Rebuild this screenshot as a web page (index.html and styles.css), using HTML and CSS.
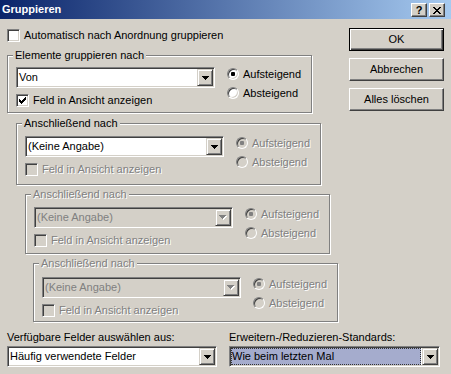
FILE: index.html
```html
<!DOCTYPE html>
<html lang="de">
<head>
<meta charset="utf-8">
<title>Gruppieren</title>
<link rel="stylesheet" href="styles.css">
</head>
<body>
<div class="titlebar">
  <span class="title">Gruppieren</span>
  <div class="caption-btns">
    <span class="cbtn help">?</span>
    <span class="cbtn"><svg width="8" height="7" viewBox="0 0 8 7"><path d="M0 0h2v1h-2zM6 0h2v1h-2zM1 1h2v1h-2zM5 1h2v1h-2zM2 2h4v1h-4zM3 3h2v1h-2zM2 4h4v1h-4zM1 5h2v1h-2zM5 5h2v1h-2zM0 6h2v1h-2zM6 6h2v1h-2z" fill="#000"/></svg></span>
  </div>
</div>
<div class="client">
  <div class="main">
    <div class="left">
      <div class="check top-check"><span class="box"></span><span>Automatisch nach Anordnung gruppieren</span></div>

      <fieldset class="group g1">
        <legend>Elemente gruppieren nach</legend>
        <div class="grow">
          <div class="gleft">
            <div class="combo"><span class="val">Von</span><span class="arrow"><svg width="7" height="4" viewBox="0 0 7 4"><path d="M0 0h7v1h-1v1h-1v1h-1v1h-1v-1h-1v-1h-1v-1h-1z" fill="#000"/></svg></span></div>
            <div class="check"><span class="box"><svg width="7" height="7" viewBox="0 0 7 7"><path d="M0 2V5H1V6H2V7H3V6H4V5H5V4H6V3H7V0H6V1H5V2H4V3H3V4H2V3H1V2Z" fill="#000"/></svg></span><span>Feld in Ansicht anzeigen</span></div>
          </div>
          <div class="gright">
            <div class="radio"><span class="rb on"></span><span>Aufsteigend</span></div>
            <div class="radio"><span class="rb"></span><span>Absteigend</span></div>
          </div>
        </div>
      </fieldset>

      <fieldset class="group g2">
        <legend>Anschließend nach</legend>
        <div class="grow">
          <div class="gleft">
            <div class="combo"><span class="val">(Keine Angabe)</span><span class="arrow"><svg width="7" height="4" viewBox="0 0 7 4"><path d="M0 0h7v1h-1v1h-1v1h-1v1h-1v-1h-1v-1h-1v-1h-1z" fill="#000"/></svg></span></div>
            <div class="check dis"><span class="box"></span><span>Feld in Ansicht anzeigen</span></div>
          </div>
          <div class="gright dis">
            <div class="radio"><span class="rb on"></span><span>Aufsteigend</span></div>
            <div class="radio"><span class="rb"></span><span>Absteigend</span></div>
          </div>
        </div>
      </fieldset>

      <fieldset class="group g3 dis">
        <legend>Anschließend nach</legend>
        <div class="grow">
          <div class="gleft">
            <div class="combo"><span class="val">(Keine Angabe)</span><span class="arrow"><svg width="8" height="5" viewBox="0 0 8 5"><path transform="translate(1 1)" d="M0 0h7v1h-1v1h-1v1h-1v1h-1v-1h-1v-1h-1v-1h-1z" fill="#fff"/><path d="M0 0h7v1h-1v1h-1v1h-1v1h-1v-1h-1v-1h-1v-1h-1z" fill="#808080"/></svg></span></div>
            <div class="check"><span class="box"></span><span>Feld in Ansicht anzeigen</span></div>
          </div>
          <div class="gright">
            <div class="radio"><span class="rb on"></span><span>Aufsteigend</span></div>
            <div class="radio"><span class="rb"></span><span>Absteigend</span></div>
          </div>
        </div>
      </fieldset>

      <fieldset class="group g4 dis">
        <legend>Anschließend nach</legend>
        <div class="grow">
          <div class="gleft">
            <div class="combo"><span class="val">(Keine Angabe)</span><span class="arrow"><svg width="8" height="5" viewBox="0 0 8 5"><path transform="translate(1 1)" d="M0 0h7v1h-1v1h-1v1h-1v1h-1v-1h-1v-1h-1v-1h-1z" fill="#fff"/><path d="M0 0h7v1h-1v1h-1v1h-1v1h-1v-1h-1v-1h-1v-1h-1z" fill="#808080"/></svg></span></div>
            <div class="check"><span class="box"></span><span>Feld in Ansicht anzeigen</span></div>
          </div>
          <div class="gright">
            <div class="radio"><span class="rb on"></span><span>Aufsteigend</span></div>
            <div class="radio"><span class="rb"></span><span>Absteigend</span></div>
          </div>
        </div>
      </fieldset>
    </div>

    <div class="buttons">
      <span class="btn default">OK</span>
      <span class="btn">Abbrechen</span>
      <span class="btn">Alles löschen</span>
    </div>
  </div>

  <div class="bottom">
    <div class="field f1">
      <span class="label">Verfügbare Felder auswählen aus:</span>
      <div class="combo"><span class="val">Häufig verwendete Felder</span><span class="arrow"><svg width="7" height="4" viewBox="0 0 7 4"><path d="M0 0h7v1h-1v1h-1v1h-1v1h-1v-1h-1v-1h-1v-1h-1z" fill="#000"/></svg></span></div>
    </div>
    <div class="field f2">
      <span class="label">Erweitern-/Reduzieren-Standards:</span>
      <div class="combo"><span class="val sel">Wie beim letzten Mal</span><span class="arrow"><svg width="7" height="4" viewBox="0 0 7 4"><path d="M0 0h7v1h-1v1h-1v1h-1v1h-1v-1h-1v-1h-1v-1h-1z" fill="#000"/></svg></span></div>
    </div>
  </div>
</div>
</body>
</html>
```

FILE: styles.css
```css
* { box-sizing: border-box; }
html, body { margin: 0; padding: 0; }
body {
  width: 451px;
  height: 374px;
  overflow: hidden;
  background: #d4d0c8;
  font-family: "Liberation Sans", Arial, sans-serif;
  font-size: 11px;
  line-height: 13px;
  color: #000;
}
svg { display: block; shape-rendering: crispEdges; }

/* title bar */
.titlebar {
  height: 19px;
  display: flex;
  justify-content: space-between;
  background: linear-gradient(to right, #0a246a, #a6caf0);
}
.title {
  color: #fff;
  font-weight: bold;
  line-height: 19px;
  padding-left: 2px;
}
.caption-btns {
  display: flex;
  gap: 2px;
  padding: 3px 6px 0 0;
}
.cbtn {
  width: 16px;
  height: 14px;
  background: #d4d0c8;
  border: 1px solid;
  border-color: #fff #404040 #404040 #fff;
  box-shadow: inset -1px -1px #808080;
  display: flex;
  align-items: center;
  justify-content: center;
}
.cbtn.help {
  font-weight: bold;
  font-size: 11px;
  line-height: 1;
  padding-top: 1px;
}

/* client */
.client { padding: 0 7px; }
.main { display: flex; }
.left { width: 335px; }

/* check boxes */
.check {
  display: flex;
  align-items: center;
  gap: 4px;
  height: 13px;
  white-space: nowrap;
}
.top-check { margin-top: 10px; }
.box {
  flex: none;
  width: 13px;
  height: 13px;
  background: #fff;
  border: 1px solid;
  border-color: #808080 #fff #fff #808080;
  box-shadow: inset 1px 1px #404040, inset -1px -1px #d4d0c8;
  padding: 2px 0 0 2px;
}

/* group boxes */
.group {
  margin: 3px 0 0 0;
  padding: 6px 8px 6px 8px;
  width: 305px;
  min-width: 0;
  border: 1px solid #808080;
  box-shadow: inset 1px 1px #fff, 1px 1px #fff;
}
.group legend {
  padding: 0 2px;
  margin-left: -3px;
  background: #d4d0c8;
  line-height: 13px;
}
.g1 { margin-top: 7px; padding-top: 5px; padding-bottom: 5px; }
.g2 { margin-top: 4px; margin-left: 9px; padding-bottom: 8px; }
.g3 { margin-left: 18px; }
.g4 { margin-left: 26px; padding-top: 7px; padding-bottom: 4px; }

.grow { display: flex; }
.gleft { width: 199px; }
.gleft .check { margin-top: 6px; }
.gright {
  margin-left: 12px;
  display: flex;
  flex-direction: column;
  gap: 5px;
}
.radio {
  display: flex;
  align-items: center;
  gap: 4px;
  height: 14px;
  white-space: nowrap;
}
.rb {
  flex: none;
  width: 12px;
  height: 12px;
  border-radius: 50%;
  background: #fff;
  border: 1px solid;
  border-color: #808080 #fff #fff #808080;
  box-shadow: inset 1px 1px #404040, inset -1px -1px #d4d0c8;
  display: flex;
  align-items: center;
  justify-content: center;
}
.rb.on::after {
  content: "";
  width: 4px;
  height: 4px;
  border-radius: 1px;
  background: #000;
}

/* disabled states */
.dis legend,
.dis .check > span:last-child,
.check.dis > span:last-child,
.dis .radio > span:last-child,
.gright.dis .radio > span:last-child {
  color: #808080;
  text-shadow: 1px 1px 0 #fff;
}
.dis .box, .check.dis .box, .dis .rb { background: #d4d0c8; }
.dis .rb.on::after { background: #808080; }
.dis .combo { background: #d4d0c8; color: #808080; }

/* combos */
.combo {
  height: 21px;
  display: flex;
  background: #fff;
  border: 1px solid;
  border-color: #808080 #fff #fff #808080;
  box-shadow: inset 1px 1px #404040, inset -1px -1px #d4d0c8;
  padding: 1px;
}
.combo .val {
  flex: 1;
  min-width: 0;
  padding-left: 1px;
  line-height: 17px;
  white-space: nowrap;
  overflow: hidden;
}
.combo .val.sel {
  margin: 0 1px 0 0;
  background: #a5accd;
  border: 1px dotted #333;
  line-height: 15px;
  padding-left: 0;
}
.arrow {
  flex: none;
  width: 16px;
  height: 17px;
  background: #d4d0c8;
  border: 1px solid;
  border-color: #d4d0c8 #404040 #404040 #d4d0c8;
  box-shadow: inset 1px 1px #fff, inset -1px -1px #808080;
  display: flex;
  align-items: center;
  justify-content: center;
}

/* buttons */
.buttons {
  margin-left: auto;
  margin-top: 9px;
  display: flex;
  flex-direction: column;
  gap: 7px;
}
.btn {
  width: 95px;
  height: 23px;
  background: #d4d0c8;
  border: 1px solid;
  border-color: #fff #404040 #404040 #fff;
  box-shadow: inset -1px -1px #808080;
  display: flex;
  align-items: center;
  justify-content: center;
}
.btn.default {
  border-color: #000;
  box-shadow: inset 1px 1px #fff, inset -1px -1px #404040, inset -2px -2px #808080;
}

/* bottom */
.bottom {
  display: flex;
  gap: 12px;
  margin-top: 9px;
}
.field {
  display: flex;
  flex-direction: column;
  gap: 2px;
}
.f1 { width: 210px; }
.f2 { width: 211px; }
.label { white-space: nowrap; }
```
